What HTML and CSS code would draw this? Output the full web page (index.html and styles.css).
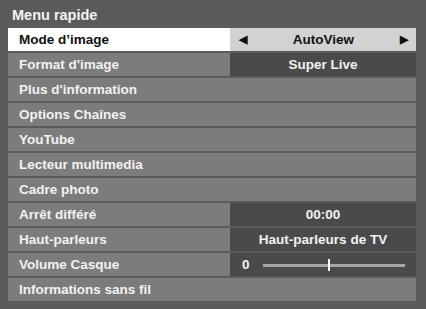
FILE: index.html
```html
<!DOCTYPE html>
<html lang="fr">
<head>
    <meta charset="UTF-8">
    <title>Menu rapide</title>
    <link rel="stylesheet" href="styles.css">
</head>
<body>
    <div class="menu">
        <div class="menu-title">Menu rapide</div>
        <div class="menu-list">
            <div class="row selected">
                <span class="label">Mode d’image</span>
                <div class="value">
                    <span class="arrow">&#9664;</span>
                    <span class="value-text">AutoView</span>
                    <span class="arrow">&#9654;</span>
                </div>
            </div>
            <div class="row">
                <span class="label">Format d'image</span>
                <div class="value"><span class="value-text">Super Live</span></div>
            </div>
            <div class="row"><span class="label">Plus d'information</span></div>
            <div class="row"><span class="label">Options Chaînes</span></div>
            <div class="row"><span class="label">YouTube</span></div>
            <div class="row"><span class="label">Lecteur multimedia</span></div>
            <div class="row"><span class="label">Cadre photo</span></div>
            <div class="row">
                <span class="label">Arrêt différé</span>
                <div class="value"><span class="value-text">00:00</span></div>
            </div>
            <div class="row">
                <span class="label">Haut-parleurs</span>
                <div class="value"><span class="value-text">Haut-parleurs de TV</span></div>
            </div>
            <div class="row">
                <span class="label">Volume Casque</span>
                <div class="value slider-value">
                    <span class="slider-num">0</span>
                    <div class="slider">
                        <div class="slider-track"></div>
                        <div class="slider-thumb" style="left: 46%"></div>
                    </div>
                </div>
            </div>
            <div class="row"><span class="label">Informations sans fil</span></div>
        </div>
    </div>
</body>
</html>
```

FILE: styles.css
```css
body {
    margin: 0;
    background-color: #5b5b5b;
    font-family: 'Liberation Sans', Arial, sans-serif;
    font-weight: bold;
}

.menu {
    width: 426px;
    height: 309px;
    padding: 0 10px 0 8px;
    box-sizing: border-box;
}

.menu-title {
    height: 28px;
    padding-top: 2px;
    box-sizing: border-box;
    line-height: 26px;
    padding-left: 4px;
    color: #f4f4f4;
    font-size: 14.5px;
}

.menu-list {
    display: flex;
    flex-direction: column;
    gap: 2px;
}

.row {
    display: flex;
    height: 23px;
    background-color: #7c7c7c;
    color: #f2f2f2;
    font-size: 13.5px;
}

.row .label {
    flex: 1;
    line-height: 23px;
    padding-left: 11px;
}

.row.selected {
    background-color: #ffffff;
    color: #111;
}

.value {
    width: 186px;
    display: flex;
    align-items: center;
    justify-content: center;
    background-color: #4a4a4a;
    color: #f2f2f2;
}

.selected .value {
    background-color: #d2d2d2;
    color: #111;
    justify-content: space-between;
    padding: 0 8px 0 9px;
    box-sizing: border-box;
}

.arrow {
    font-size: 11px;
}

.slider-value {
    justify-content: flex-start;
    padding: 0 11px 0 12px;
    box-sizing: border-box;
}

.slider-num {
    width: 21px;
}

.slider {
    position: relative;
    flex: 1;
    height: 12px;
}

.slider-track {
    position: absolute;
    left: 0;
    right: 0;
    top: 5px;
    height: 3px;
    background-color: #a6a6a6;
}

.slider-thumb {
    position: absolute;
    top: 0;
    width: 2px;
    height: 12px;
    background-color: #ffffff;
}
```
